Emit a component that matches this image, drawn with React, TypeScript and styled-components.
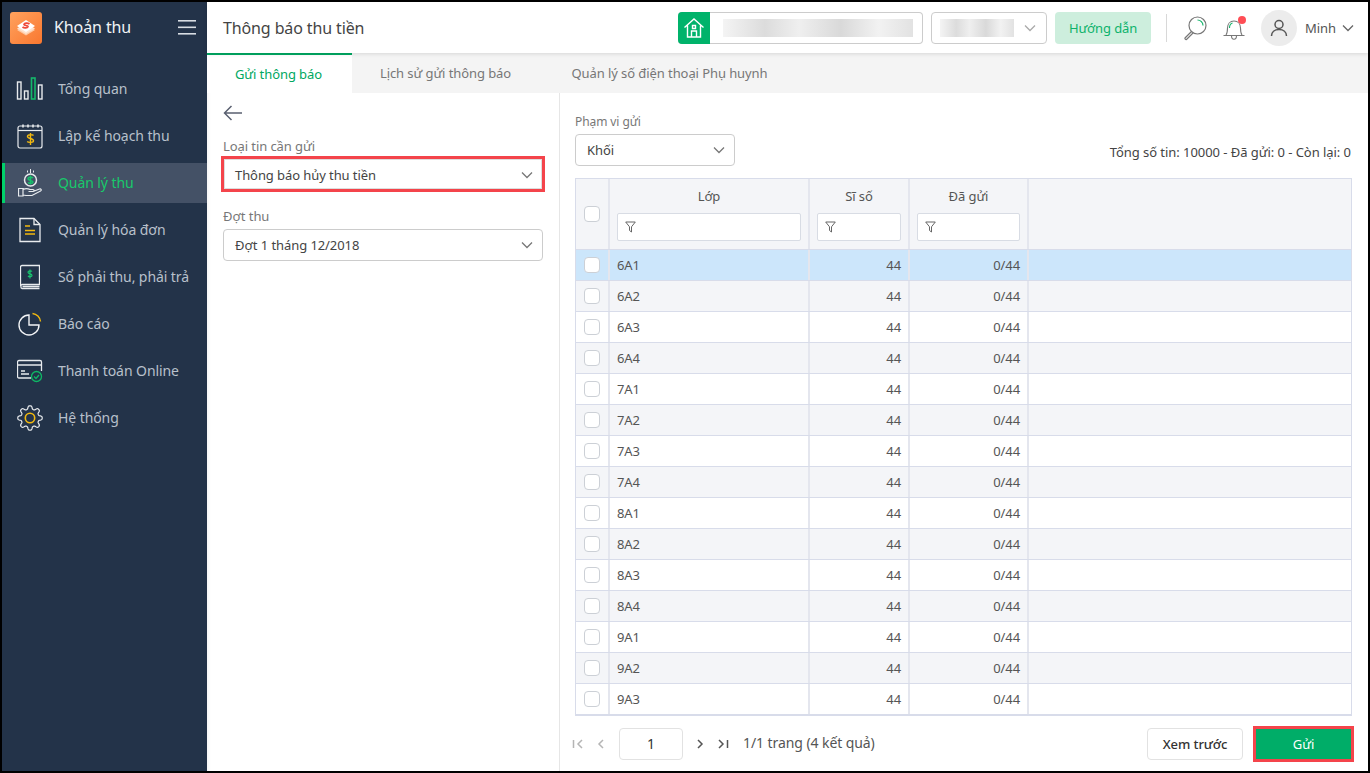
import React from "react";
import styled, { createGlobalStyle } from "styled-components";

const GlobalStyle = createGlobalStyle`
  html, body { margin: 0; padding: 0; background: #000; }
  * { box-sizing: border-box; }
  body {
    font-family: "Noto Sans", "Open Sans", sans-serif;
    font-size: 13px;
    letter-spacing: -0.08px;
    color: #444;
  }
`;

const Frame = styled.div`
  width: 1370px;
  height: 773px;
  border: 2px solid #000;
  display: flex;
  background: #fff;
  overflow: hidden;
`;

//-------------Sidebar--------------------

const Sidebar = styled.aside`
  width: 205px;
  flex: none;
  background: #233349;
  display: flex;
  flex-direction: column;
`;

const Brand = styled.div`
  height: 51px;
  display: flex;
  align-items: center;
  padding: 0 11px 0 8px;
  margin-bottom: 16px;
`;

const BrandName = styled.span`
  font-size: 16px;
  letter-spacing: -0.1px;
  color: #f1f3f5;
  margin-left: 12px;
  padding-bottom: 2px;
  flex: 1;
`;

const Menu = styled.nav`
  display: flex;
  flex-direction: column;
  gap: 7px;
`;

const MenuItem = styled.div<{ $active?: boolean }>`
  height: 40px;
  display: flex;
  align-items: center;
  padding-left: ${(p) => (p.$active ? "11px" : "14px")};
  border-left: ${(p) => (p.$active ? "3px solid #00d26a" : "none")};
  background: ${(p) => (p.$active ? "#445166" : "transparent")};
  color: ${(p) => (p.$active ? "#18c96b" : "#b8c0cb")};
  font-size: 14px;
  span { margin-left: 14px; padding-bottom: 2px; white-space: nowrap; }
`;

const IconSlot = styled.div`
  width: 28px;
  height: 32px;
  flex: none;
  display: flex;
  align-items: center;
  justify-content: center;
`;

//-------------Header--------------------

const Main = styled.main`
  flex: 1;
  min-width: 0;
  display: flex;
  flex-direction: column;
`;

const Header = styled.header`
  height: 51px;
  flex: none;
  display: flex;
  align-items: center;
  padding: 0 14px 0 16px;
  background: #fff;
  box-shadow: 0 1px 4px rgba(0, 0, 0, 0.12);
  position: relative;
  z-index: 1;
`;

const PageTitle = styled.h1`
  margin: 0;
  flex: 1;
  font-size: 16px;
  font-weight: 400;
  letter-spacing: -0.12px;
  color: #444;
`;

const SchoolPicker = styled.div`
  width: 245px;
  height: 32px;
  display: flex;
  align-items: center;
  border: 1px solid #ccc;
  border-left: none;
  border-radius: 4px;
`;

const HomeBadge = styled.div`
  width: 32px;
  height: 32px;
  background: #00b36b;
  border-radius: 4px 0 0 4px;
  display: flex;
  align-items: center;
  justify-content: center;
  flex: none;
  margin-right: 13px;
`;

const Blurred = styled.div<{ $w: number }>`
  width: ${(p) => p.$w}px;
  height: 18px;
  background: linear-gradient(90deg, #f4f4f4, #dcdcdc 22%, #efefef 40%, #d9d9d9 62%, #f2f2f2 82%, #e2e2e2);
`;

const YearPicker = styled.div`
  width: 116px;
  height: 32px;
  margin-left: 8px;
  display: flex;
  align-items: center;
  justify-content: space-between;
  padding: 0 10px 0 8px;
  border: 1px solid #ccc;
  border-radius: 4px;
`;

const GuideButton = styled.button`
  width: 96px;
  height: 32px;
  margin-left: 8px;
  border: none;
  border-radius: 4px;
  background: #cdeedd;
  color: #0cb26b;
  font: inherit;
  letter-spacing: inherit;
  font-size: 13px;
  padding: 0;
`;

const Divider = styled.div`
  width: 1px;
  height: 28px;
  background: #d8d8d8;
  margin: 0 16px 0 15px;
`;

const ToolIcon = styled.div`
  position: relative;
  width: 24px;
  height: 26px;
  margin-right: 15px;
`;

const RedDot = styled.i`
  position: absolute;
  top: 1px;
  right: 0;
  width: 8px;
  height: 8px;
  border-radius: 50%;
  background: #ff4d55;
`;

const Avatar = styled.div`
  width: 36px;
  height: 36px;
  border-radius: 50%;
  background: #ececec;
  display: flex;
  align-items: center;
  justify-content: center;
`;

const UserName = styled.span`
  margin: 0 6px 0 8px;
  font-size: 13px;
  color: #555;
`;

//-------------Tabs--------------------

const TabBar = styled.div`
  height: 40px;
  flex: none;
  display: flex;
  background: #f4f4f4;
`;

const Tab = styled.div<{ $active?: boolean; $w: number }>`
  width: ${(p) => p.$w}px;
  display: flex;
  align-items: center;
  justify-content: center;
  font-size: 13px;
  padding-right: ${(p) => (p.$active ? "2px" : "0")};
  background: ${(p) => (p.$active ? "#fff" : "transparent")};
  color: ${(p) => (p.$active ? "#00a862" : "#777")};
  border-top: ${(p) => (p.$active ? "2px solid #00a862" : "none")};
`;

const Content = styled.div`
  flex: 1;
  min-height: 0;
  display: flex;
`;

//-------------Left form--------------------

const FormPanel = styled.section`
  width: 353px;
  flex: none;
  padding: 10px 16px 0;
  border-right: 1px solid #e6e6e6;
  box-shadow: inset 4px 0 4px -4px rgba(0, 0, 0, 0.08);
`;

const BackButton = styled.div`
  height: 20px;
  display: flex;
  align-items: center;
  margin-bottom: 14px;
`;

const FieldLabel = styled.label<{ $small?: boolean }>`
  display: block;
  font-size: ${(p) => (p.$small ? "12px" : "13px")};
  line-height: 18px;
  color: #777;
  padding-top: ${(p) => (p.$small ? "1px" : "0")};
  margin-bottom: ${(p) => (p.$small ? "3px" : "4px")};
`;

const Select = styled.div<{ $w?: number }>`
  width: ${(p) => (p.$w ? `${p.$w}px` : "100%")};
  height: 32px;
  display: flex;
  align-items: center;
  justify-content: space-between;
  padding: 0 9px 0 11px;
  border: 1px solid #ccc;
  border-radius: 4px;
  background: #fff;
  font-size: 13px;
  color: #444;
`;

const MarkedSelect = styled(Select)`
  width: 318px;
  height: 30px;
  margin: 0 0 18px 1px;
  padding: 2px 8px 0 10px;
  outline: 3px solid #f4444b;
  border-radius: 0;
  border-color: #ddd;
`;

const Field = styled.div`
  margin-bottom: 16px;
`;

//-------------Right table--------------------

const TablePanel = styled.section`
  flex: 1;
  min-width: 0;
  padding: 19px 16px 0 15px;
  display: flex;
  flex-direction: column;
`;

const Toolbar = styled.div`
  display: flex;
  align-items: flex-end;
  justify-content: space-between;
  margin-bottom: 12px;
`;

const Totals = styled.span`
  font-size: 13px;
  letter-spacing: -0.05px;
  color: #444;
  line-height: 18px;
  margin: 0 1px 5px 0;
`;

const Table = styled.div`
  border: 1px solid #d8dcea;
  border-bottom-width: 2px;
  display: flex;
  flex-direction: column;
`;

const cols = "34px 200px 100px 119px 1fr";

const HeadRow = styled.div`
  display: grid;
  grid-template-columns: ${cols};
  height: 71px;
  background: #f4f5f8;
  border-bottom: 1px solid #d8dcea;
`;

const HeadCell = styled.div`
  border-right: 2px solid #e4e6ee;
  padding: 7px 7px 0;
  display: flex;
  flex-direction: column;
  align-items: stretch;
  font-size: 13px;
  color: #555;
  text-align: center;
  line-height: 20px;
  &:last-child { border-right: none; }
`;

const CheckHead = styled(HeadCell)`
  align-items: center;
  justify-content: center;
  padding: 0;
`;

const FilterBox = styled.div`
  height: 28px;
  margin-top: 7px;
  background: #fff;
  border: 1px solid #d8dce4;
  border-radius: 2px;
  display: flex;
  align-items: center;
  padding-left: 7px;
`;

const Row = styled.div<{ $tone: "sel" | "alt" | "plain" }>`
  display: grid;
  grid-template-columns: ${cols};
  height: 31px;
  background: ${(p) => (p.$tone === "sel" ? "#cce6fb" : p.$tone === "alt" ? "#f4f5f8" : "#fff")};
  border-bottom: 1px solid #d8dcea;
  &:last-child { border-bottom: none; height: 30px; }
`;

const Cell = styled.div<{ $right?: boolean }>`
  border-right: 2px solid #e4e6ee;
  padding: 0 7px;
  display: flex;
  align-items: center;
  justify-content: ${(p) => (p.$right ? "flex-end" : "flex-start")};
  font-size: 13px;
  color: #555;
  &:last-child { border-right: none; }
`;

const CheckCell = styled(Cell)`
  justify-content: center;
  padding: 0;
`;

const Check = styled.span`
  width: 16px;
  height: 16px;
  border: 1px solid #ccd0d6;
  border-radius: 4px;
  background: #fff;
`;

//-------------Footer--------------------

const Footer = styled.div`
  flex: 1;
  display: flex;
  align-items: center;
`;

const Pager = styled.div`
  flex: 1;
  display: flex;
  align-items: center;
  margin-left: -3px;
  font-size: 14px;
  color: #555;
`;

const PagerIcon = styled.span<{ $gap: number }>`
  width: 12px;
  height: 12px;
  display: flex;
  margin-right: ${(p) => p.$gap}px;
`;

const PageInput = styled.div`
  width: 64px;
  height: 32px;
  margin-right: 11px;
  border: 1px solid #e2e2e2;
  border-radius: 4px;
  display: flex;
  align-items: center;
  justify-content: center;
  font-size: 14px;
  color: #333;
`;

const PageText = styled.span`
  padding-bottom: 2px;
`;

const PreviewButton = styled.button`
  width: 96px;
  height: 32px;
  border: 1px solid #e2e2e2;
  border-radius: 4px;
  background: #fff;
  font: inherit;
  letter-spacing: inherit;
  font-size: 13px;
  font-weight: 500;
  color: #333;
  padding: 0;
`;

const SendButton = styled.button`
  width: 95px;
  height: 30px;
  margin: 0 1px 0 13px;
  border: none;
  background: #00ad68;
  outline: 3px solid #f4444b;
  color: #fff;
  font: inherit;
  font-size: 13px;
  padding: 0;
`;

//-------------Icons--------------------

const Chevron = ({ c = "#777" }: { c?: string }) => (
  <svg width="12" height="8" viewBox="0 0 12 8" fill="none" stroke={c} strokeWidth="1.3">
    <path d="M1 1.5 6 6.5 11 1.5" />
  </svg>
);

const LogoIcon = () => (
  <svg width="32" height="32" viewBox="0 0 32 32">
    <defs>
      <linearGradient id="lg" x1="0" y1="0" x2="1" y2="1">
        <stop offset="0" stopColor="#ffa25e" />
        <stop offset="1" stopColor="#f9772f" />
      </linearGradient>
    </defs>
    <rect width="32" height="32" rx="3" fill="url(#lg)" />
    <path d="M7 18 16 23.500 25 18 16 12.500Z" fill="#ffc9a2" />
    <path d="M7 16.500 16 22 25 16.500 16 11Z" fill="#ffe3cf" />
    <path d="M7 14 16 8 25 14 16 20Z" fill="#fff" />
    <path d="M19.500 12c-2-1.500-5-1-5.500.3-.5 1.400 4.500 1 4 2.400-.5 1.300-4 1.500-5.500.3" fill="none" stroke="#ef4a3a" strokeWidth="1.700" />
  </svg>
);

const Burger = () => (
  <svg width="18" height="15" viewBox="0 0 18 15" fill="#d8dde3">
    <rect width="18" height="1.6" />
    <rect y="6.5" width="18" height="1.6" />
    <rect y="13" width="18" height="1.6" />
  </svg>
);

const ChartIcon = () => (
  <svg width="28" height="24" viewBox="0 0 28 24" fill="none" stroke="#e8ebee" strokeWidth="1.4">
    <rect x="1.5" y="5" width="3.5" height="17" />
    <rect x="8.5" y="14" width="3.5" height="8" />
    <rect x="15.5" y="1" width="3.5" height="21" stroke="#15b86b" strokeWidth="1.6" />
    <rect x="22.5" y="8" width="3.5" height="14" />
  </svg>
);

const CalendarIcon = () => (
  <svg width="26" height="26" viewBox="1 0 26 26" fill="none" stroke="#e8ebee" strokeWidth="1.2">
    <rect x="2" y="3" width="24" height="22" rx="2" />
    <path d="M2 7.5h24" />
    <path d="M7 1.5v3M12 1.5v3M17 1.5v3M22 1.5v3" strokeWidth="1.6" />
    <path d="M17.500 12.500c-1-1.200-6-1.300-6 1 0 2.700 6 1.300 6 4.200 0 2-5 2.200-6.300.8M14.500 10v12" stroke="#f2b90f" strokeWidth="1.400" />
  </svg>
);

const HandCoinIcon = () => (
  <svg width="24" height="28" viewBox="1 0 24 28" fill="none" stroke="#e8ebee" strokeWidth="1.200">
    <path d="M13.500 0v4M10.500 1.500v2M16.500 1.500v2" strokeWidth="1" />
    <circle cx="13.500" cy="11" r="6" strokeWidth="1.500" />
    <path d="M16 9c-.8-1.200-5-1.200-5 .8 0 2.200 5 1 5 3.200 0 1.800-4 1.800-5 .6M13.500 6.500v9" stroke="#16c26a" strokeWidth="1.500" />
    <path d="M1.500 19.500h4.500v7.500H1.500zM6 20.500c3-1.500 5-1 7 0h3c1.500 0 1.500 2 0 2h-4.500M16 22.500l6.500-2.500c1.500-.5 2.500 1 1 2L15 26.500H9L6 26" />
  </svg>
);

const InvoiceIcon = () => (
  <svg width="22" height="26" viewBox="1 0 22 26" fill="none" stroke="#e8ebee" strokeWidth="1.300">
    <path d="M2 1.500h14l6 6V24.500H2z" />
    <path d="M16 1.500v6h6" />
    <path d="M7 9h5M7 13.500h10M7 17h10" stroke="#f2b90f" strokeWidth="1.600" />
  </svg>
);

const LedgerIcon = () => (
  <svg width="20" height="26" viewBox="2.500 0 20 26" fill="none" stroke="#e8ebee" strokeWidth="1.300">
    <path d="M3 22V3c0-1 .7-1.500 1.500-1.500H22V20.500H4.500C3 20.500 3 24.500 4.500 24.500H22M5 22.500h17" />
    <path d="M14.500 7.500c-.8-1-4-1-4 .8 0 2.100 4 .9 4 3.100 0 1.500-3 1.600-4 .6M12.500 5.500v9" stroke="#19c46e" strokeWidth="1.200" />
  </svg>
);

const PieIcon = () => (
  <svg width="24" height="24" viewBox="0 0 24 24" fill="none" stroke="#f2f4f6" strokeWidth="1.400">
    <path d="M11 3a10 10 0 1 0 10 10H11z" />
    <path d="M14.500 1.500a9 9 0 0 1 8 8" stroke="#f2b90f" />
  </svg>
);

const CardIcon = () => (
  <svg width="26" height="24" viewBox="1 0 26 24" fill="none" stroke="#e8ebee" strokeWidth="1.300">
    <path d="M15 19H3c-1 0-1.500-.7-1.500-1.500V3C1.500 2 2.200 1.500 3 1.500h21c1 0 1.500.7 1.500 1.500v9" />
    <path d="M1.500 6h24" strokeWidth="1.500" />
    <path d="M5 12h4M5 15h8" />
    <circle cx="20.500" cy="17.500" r="5" stroke="#0fb765" />
    <path d="M18 17.500l2 2 3-3.500" stroke="#0fb765" />
  </svg>
);

// scalloped outline: radius swings with 8 teeth
const gearPath = Array.from({ length: 160 }, (_, i) => {
  const a = (i / 160) * Math.PI * 2;
  const r = 10.6 + 1.7 * Math.tanh(1.8 * Math.cos(8 * a));
  return `${(13 + r * Math.cos(a)).toFixed(2)},${(13 + r * Math.sin(a)).toFixed(2)}`;
}).join(" ");

const GearIcon = () => (
  <svg width="26" height="26" viewBox="0 0 26 26" fill="none" stroke="#e8ebee" strokeWidth="1.200">
    <polygon points={gearPath} />
    <circle cx="13" cy="13" r="4.700" stroke="#f2b90f" strokeWidth="1.600" />
  </svg>
);

const HomeIcon = () => (
  <svg width="22" height="22" viewBox="0 0 22 22" fill="none" stroke="#fff" strokeWidth="1.400">
    <path d="M1.500 10.500 11 2l9.500 8.500M4.500 8.500V20h13V8.500" />
    <path d="M8.500 20v-6h5v6M9.500 8.500h3v3h-3z" />
  </svg>
);

const SearchIcon = () => (
  <svg width="24" height="26" viewBox="0 0 24 26" fill="none" stroke="#777" strokeWidth="1.200">
    <circle cx="14.500" cy="10.500" r="8.500" />
    <path d="M14.500 5a5.500 5.500 0 0 1 5.500 5.500" stroke="#12b56b" />
    <path d="M8.500 16.500 2 23c-.5.7.7 2 1.500 1.500L10 18" />
  </svg>
);

const BellIcon = () => (
  <svg width="24" height="26" viewBox="0 0 24 26" fill="none" stroke="#777" strokeWidth="1.100">
    <path d="M4 20c1.500-2 1.500-4 1.500-7 0-4 2.500-7 6.500-7s6.500 3 6.500 7c0 3 0 5 1.500 7M1.500 20.500h21M9.500 20.500c0 5 5 5 5 0" />
    <path d="M7.500 13c0-3 1.500-4.500 3-5" stroke="#12b56b" />
  </svg>
);

const UserIcon = () => (
  <svg width="18" height="18" viewBox="0 0 18 18" fill="none" stroke="#555" strokeWidth="1.500">
    <circle cx="9" cy="5.500" r="4" />
    <path d="M1.500 17c0-4 3-6.500 7.500-6.500s7.500 2.500 7.500 6.500" />
  </svg>
);

const BackArrow = () => (
  <svg width="20" height="16" viewBox="0 0 20 16" fill="none" stroke="#5a6070" strokeWidth="1.500">
    <path d="M19 8H1.500M8.500 1 1.500 8l7 7" />
  </svg>
);

const FilterIcon = () => (
  <svg width="11" height="12" viewBox="0 0 11 12" fill="none" stroke="#666" strokeWidth="1">
    <path d="M.7 1h9.600L6.500 5.800V11L4.500 9.500V5.800z" />
  </svg>
);

const PagerArrow = ({ d, c }: { d: string; c: string }) => (
  <svg width="12" height="12" viewBox="0 0 12 12" fill="none" stroke={c} strokeWidth="1.500">
    <path d={d} />
  </svg>
);

//-------------Data--------------------

const menu = [
  { label: "Tổng quan", icon: <ChartIcon /> },
  { label: "Lập kế hoạch thu", icon: <CalendarIcon /> },
  { label: "Quản lý thu", icon: <HandCoinIcon />, active: true },
  { label: "Quản lý hóa đơn", icon: <InvoiceIcon /> },
  { label: "Sổ phải thu, phải trả", icon: <LedgerIcon /> },
  { label: "Báo cáo", icon: <PieIcon /> },
  { label: "Thanh toán Online", icon: <CardIcon /> },
  { label: "Hệ thống", icon: <GearIcon /> },
];

const classes = ["6A1", "6A2", "6A3", "6A4", "7A1", "7A2", "7A3", "7A4", "8A1", "8A2", "8A3", "8A4", "9A1", "9A2", "9A3"];

export default function App() {
  return (
    <>
      <GlobalStyle />
      <Frame>
        <Sidebar>
          <Brand>
            <LogoIcon />
            <BrandName>Khoản thu</BrandName>
            <Burger />
          </Brand>
          <Menu>
            {menu.map((m) => (
              <MenuItem key={m.label} $active={m.active}>
                <IconSlot>{m.icon}</IconSlot>
                <span>{m.label}</span>
              </MenuItem>
            ))}
          </Menu>
        </Sidebar>
        <Main>
          <Header>
            <PageTitle>Thông báo thu tiền</PageTitle>
            <SchoolPicker>
              <HomeBadge>
                <HomeIcon />
              </HomeBadge>
              <Blurred $w={190} />
            </SchoolPicker>
            <YearPicker>
              <Blurred $w={74} />
              <Chevron c="#aaa" />
            </YearPicker>
            <GuideButton>Hướng dẫn</GuideButton>
            <Divider />
            <ToolIcon>
              <SearchIcon />
            </ToolIcon>
            <ToolIcon>
              <BellIcon />
              <RedDot />
            </ToolIcon>
            <Avatar>
              <UserIcon />
            </Avatar>
            <UserName>Minh</UserName>
            <Chevron c="#666" />
          </Header>
          <TabBar>
            <Tab $active $w={145}>Gửi thông báo</Tab>
            <Tab $w={187}>Lịch sử gửi thông báo</Tab>
            <Tab $w={261}>Quản lý số điện thoại Phụ huynh</Tab>
          </TabBar>
          <Content>
            <FormPanel>
              <BackButton>
                <BackArrow />
              </BackButton>
              <Field>
                <FieldLabel>Loại tin cần gửi</FieldLabel>
                <MarkedSelect>
                  Thông báo hủy thu tiền
                  <Chevron />
                </MarkedSelect>
              </Field>
              <Field>
                <FieldLabel>Đợt thu</FieldLabel>
                <Select>
                  Đợt 1 tháng 12/2018
                  <Chevron />
                </Select>
              </Field>
            </FormPanel>
            <TablePanel>
              <Toolbar>
                <div>
                  <FieldLabel $small>Phạm vi gửi</FieldLabel>
                  <Select $w={160}>
                    Khối
                    <Chevron />
                  </Select>
                </div>
                <Totals>Tổng số tin: 10000 - Đã gửi: 0 - Còn lại: 0</Totals>
              </Toolbar>
              <Table>
                <HeadRow>
                  <CheckHead>
                    <Check />
                  </CheckHead>
                  {["Lớp", "Sĩ số", "Đã gửi"].map((h) => (
                    <HeadCell key={h}>
                      {h}
                      <FilterBox>
                        <FilterIcon />
                      </FilterBox>
                    </HeadCell>
                  ))}
                  <HeadCell />
                </HeadRow>
                {classes.map((name, i) => (
                  <Row key={name} $tone={i === 0 ? "sel" : i % 2 === 1 ? "alt" : "plain"}>
                    <CheckCell>
                      <Check />
                    </CheckCell>
                    <Cell>{name}</Cell>
                    <Cell $right>44</Cell>
                    <Cell $right>0/44</Cell>
                    <Cell />
                  </Row>
                ))}
              </Table>
              <Footer>
                <Pager>
                  <PagerIcon $gap={11}>
                    <PagerArrow d="M1.500 2v8M10 2 6 6l4 4" c="#b5b5b5" />
                  </PagerIcon>
                  <PagerIcon $gap={12}>
                    <PagerArrow d="M8 2 4 6l4 4" c="#b5b5b5" />
                  </PagerIcon>
                  <PageInput>1</PageInput>
                  <PagerIcon $gap={11}>
                    <PagerArrow d="M4 2l4 4-4 4" c="#555" />
                  </PagerIcon>
                  <PagerIcon $gap={14}>
                    <PagerArrow d="M2 2l4 4-4 4M10.500 2v8" c="#555" />
                  </PagerIcon>
                  <PageText>1/1 trang (4 kết quả)</PageText>
                </Pager>
                <PreviewButton>Xem trước</PreviewButton>
                <SendButton>Gửi</SendButton>
              </Footer>
            </TablePanel>
          </Content>
        </Main>
      </Frame>
    </>
  );
}
